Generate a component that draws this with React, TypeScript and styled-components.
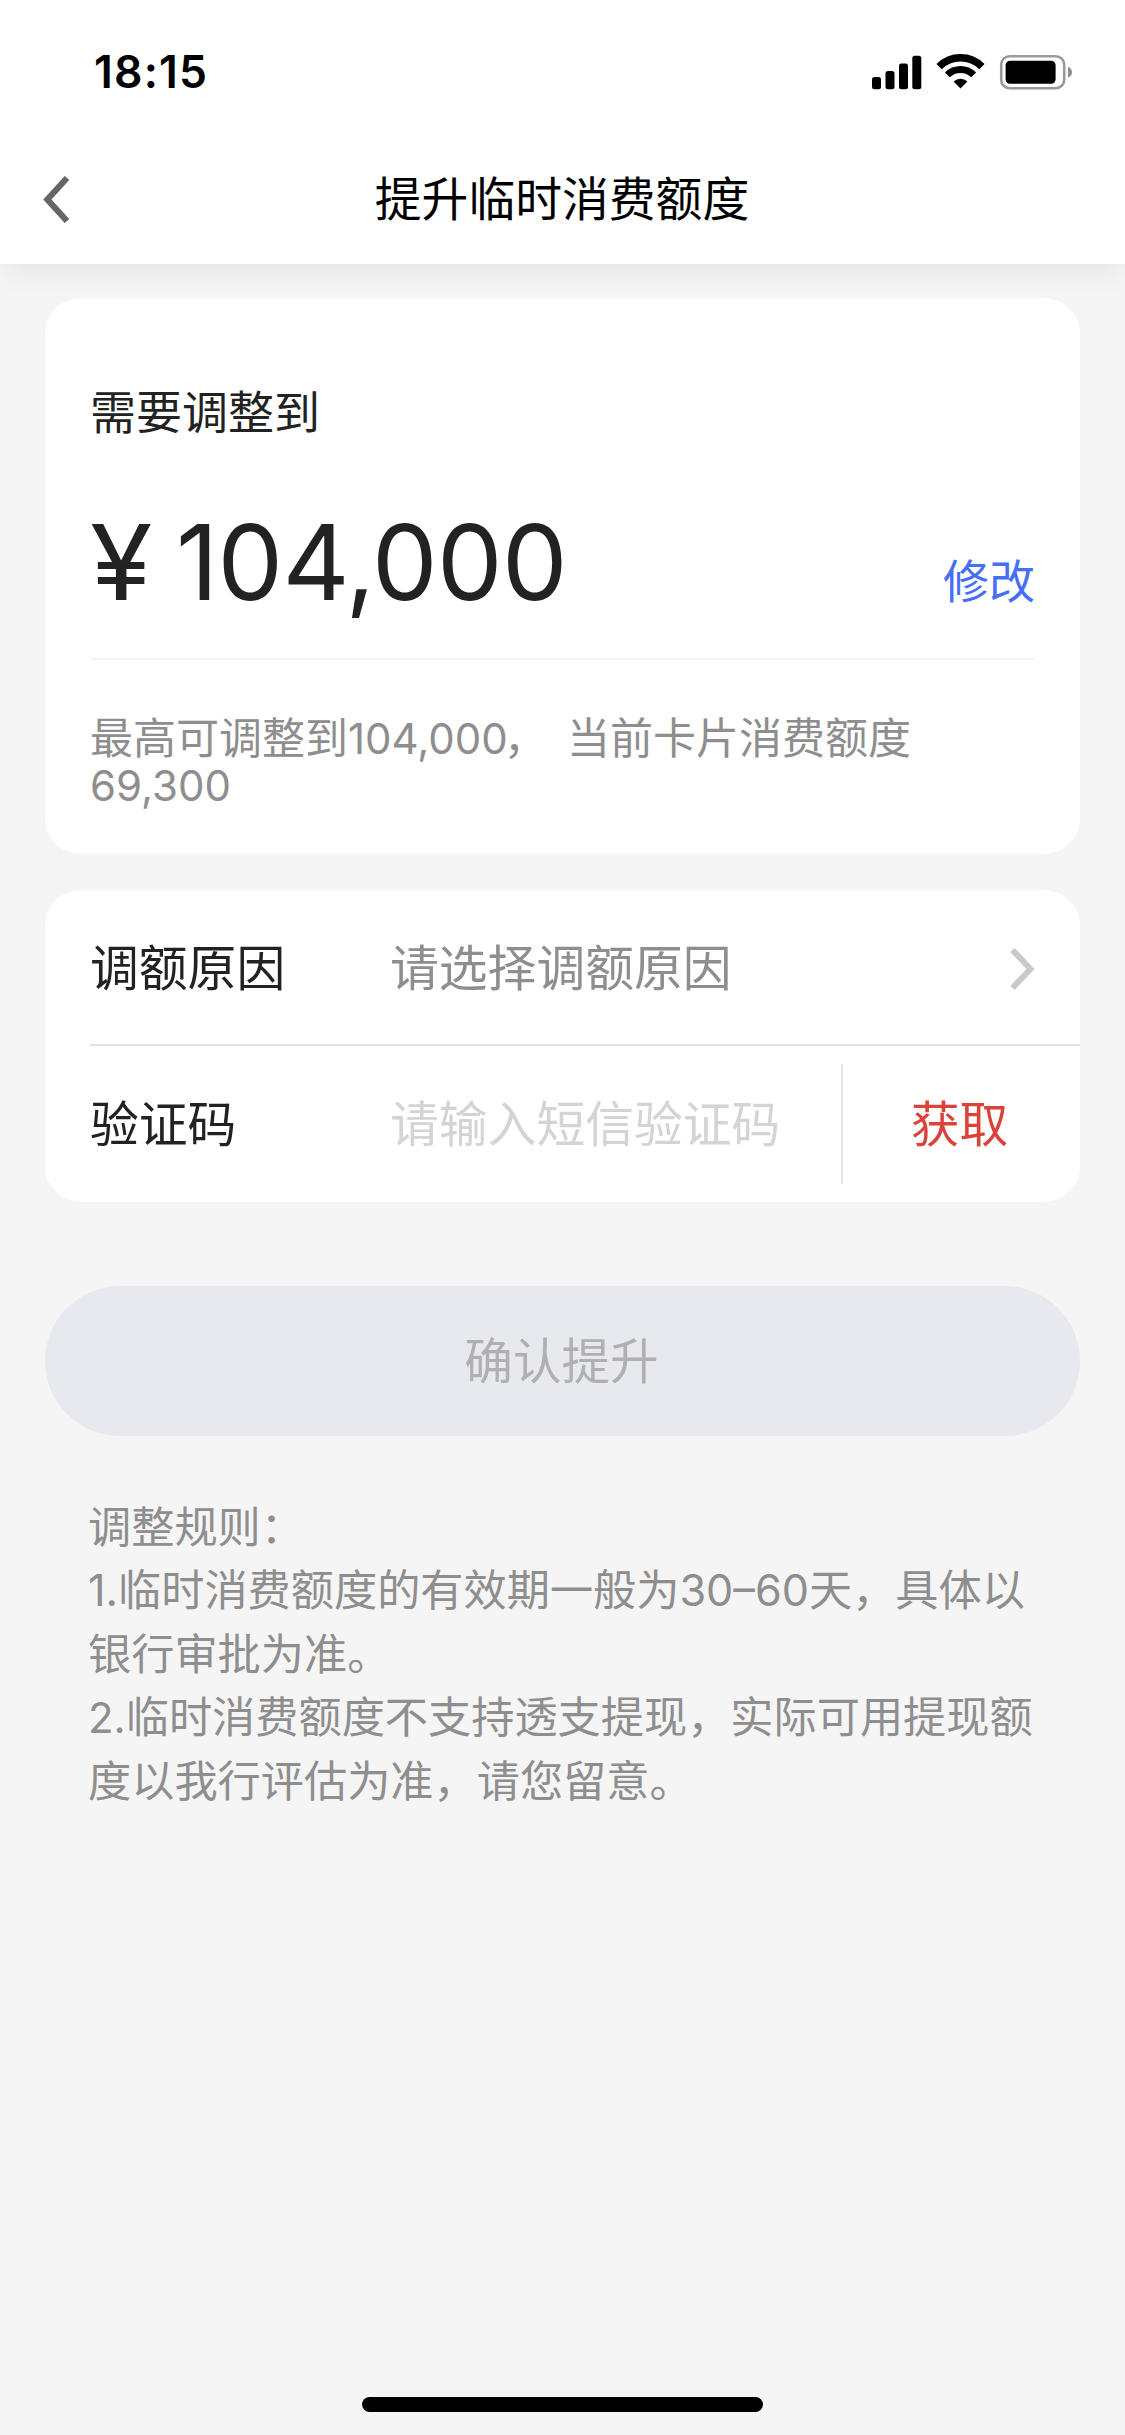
import React from "react";
import styled, { createGlobalStyle } from "styled-components";

const GlobalStyle = createGlobalStyle`
  * { box-sizing: border-box; }
  body { margin: 0; background: #f5f5f5; }
`;

const Screen = styled.div`
  display: flex;
  flex-direction: column;
  width: 1125px;
  height: 2435px;
  background: #f5f5f5;
  font-family: Inter, "Noto Sans CJK SC", sans-serif;
  font-weight: 400;
  color: #222;
  white-space: nowrap;
`;

const Header = styled.header`
  height: 264px;
  background: #fff;
  box-shadow: 0 8px 30px -4px rgba(0, 0, 0, 0.085);
`;

const StatusBar = styled.div`
  display: flex;
  justify-content: space-between;
  align-items: center;
  height: 132px;
  padding: 12px 52px 0 94px;
`;

const Clock = styled.time`
  font-size: 44.5px;
  line-height: 60px;
  font-weight: 600;
  letter-spacing: 1.2px;
  color: #000;
`;

const NavBar = styled.div`
  display: grid;
  grid-template-columns: 120px 1fr 120px;
  align-items: center;
  height: 132px;
`;

const BackButton = styled.button`
  display: flex;
  padding: 1px 0 0 42px;
  border: 0;
  background: none;
`;

const Title = styled.h1`
  margin: 1px 1px 0 0;
  text-align: center;
  font-size: 46.8px;
  line-height: 60px;
  font-weight: 400;
  color: #000;
`;

const Content = styled.main`
  display: flex;
  flex-direction: column;
  flex: 1;
  padding: 34px 45px 0;
`;

const Card = styled.section`
  border-radius: 36px;
  background: #fff;
  overflow: hidden;
`;

const AmountCard = styled(Card)`
  height: 556px;
  padding: 84px 45px 0;
`;

const Caption = styled.div`
  font-size: 46px;
  line-height: 60px;
`;

const AmountRow = styled.div`
  display: flex;
  justify-content: space-between;
  align-items: flex-end;
  margin-top: 60px;
  padding-bottom: 36px;
  border-bottom: 2px solid #f5f5f5;
`;

const Amount = styled.div`
  display: flex;
  font-size: 104px;
  line-height: 120px;
  letter-spacing: -0.7px;
`;

const Currency = styled.span`
  width: 86px;
  transform: scaleX(1.09);
  transform-origin: left;
`;

const EditLink = styled.button`
  margin: 0 0 11px;
  padding: 0;
  border: 0;
  background: none;
  font: inherit;
  font-size: 46px;
  line-height: 60px;
  color: #466ff5;
`;

const LimitNote = styled.p`
  margin: 55px 0 0;
  font-size: 43px;
  line-height: 46px;
  color: #8e8e8e;
`;

const Digits = styled.span`
  font-size: 42px;
`;

const Comma = styled.span`
  margin: 0 8px 0 -4px;
`;

const FormCard = styled(Card)`
  margin-top: 36px;
  height: 312px;
  padding-left: 45px;
`;

const Field = styled.div<{ $divided?: boolean }>`
  display: flex;
  align-items: center;
  height: 156px;
  padding-top: ${(p) => (p.$divided ? "4px" : "2px")};
  font-size: 48.8px;
  line-height: 64px;
  border-bottom: ${(p) => (p.$divided ? "2px solid #e3e3e5" : "0")};
`;

const FieldLabel = styled.label`
  width: 300px;
`;

const FieldValue = styled.div`
  flex: 1;
  color: #8e8e8e;
`;

const ChevronBox = styled.div`
  display: flex;
  padding-right: 45px;
`;

const CodeInput = styled.input`
  flex: 1;
  min-width: 0;
  height: 64px;
  padding: 0;
  border: 0;
  outline: 0;
  background: none;
  font: inherit;
  &::placeholder {
    color: #d4d4d4;
    opacity: 1;
  }
`;

const FetchButton = styled.button`
  width: 239px;
  height: 120px;
  margin-top: -2px;
  padding: 2px 4px 0 0;
  border: 0;
  border-left: 2px solid #e6e6e8;
  background: none;
  font: inherit;
  color: #d9433a;
`;

const SubmitButton = styled.button`
  flex: none;
  height: 150px;
  margin-top: 84px;
  padding: 1px 2px 0 0;
  border: 0;
  border-radius: 75px;
  background: #e8e9ee;
  font: inherit;
  font-size: 48.6px;
  line-height: 64px;
  color: #b0b0b3;
`;

const Rules = styled.div`
  margin-top: 60px;
  padding-left: 43px;
  font-size: 43.2px;
  line-height: 63.4px;
  color: #8e8e8e;
`;

const RuleLine = styled.div``;

const HomeIndicator = styled.div`
  align-self: center;
  width: 401px;
  height: 15px;
  margin-bottom: 23px;
  border-radius: 8px;
  background: #000;
`;

const StatusIcons = () => (
  <svg width="202" height="40" viewBox="871 51 202 40">
    <rect x="872" y="76" width="9" height="12.3" rx="2.5" />
    <rect x="885.5" y="70" width="9" height="18.3" rx="2.5" />
    <rect x="899" y="62.5" width="9" height="25.8" rx="2.5" />
    <rect x="912.3" y="54.8" width="9" height="33.5" rx="2.5" />
    <path d="M939.1 65.6A30.2 30.2 0 0 1 981.9 65.6" fill="none" stroke="#000" strokeWidth="7.5" />
    <path d="M947.4 73.9A18.5 18.5 0 0 1 973.6 73.9" fill="none" stroke="#000" strokeWidth="7" />
    <path d="M960.5 87.5L953.6 80.4A10 10 0 0 1 967.4 80.4Z" />
    <rect x="1001.2" y="55.2" width="63" height="32" rx="8.5" fill="none" stroke="#9a9a9a" strokeWidth="2.6" />
    <rect x="1005.6" y="59.7" width="50" height="23" rx="4.5" />
    <path d="M1068 65.8C1070.6 66.8 1072 68.8 1072 71.2C1072 73.6 1070.6 75.6 1068 76.6Z" fill="#8f8f8f" />
  </svg>
);

export default function App() {
  return (
    <>
      <GlobalStyle />
      <Screen>
        <Header>
          <StatusBar>
            <Clock>18:15</Clock>
            <StatusIcons />
          </StatusBar>
          <NavBar>
            <BackButton aria-label="返回">
              <svg width="30" height="48" viewBox="0 0 30 48" fill="none" stroke="#666" strokeWidth="6.2">
                <path d="M25 3L5.4 24.5L25 46" />
              </svg>
            </BackButton>
            <Title>提升临时消费额度</Title>
          </NavBar>
        </Header>
        <Content>
          <AmountCard>
            <Caption>需要调整到</Caption>
            <AmountRow>
              <Amount>
                <Currency>¥</Currency>
                <span>104,000</span>
              </Amount>
              <EditLink>修改</EditLink>
            </AmountRow>
            <LimitNote>
              最高可调整到<Digits>104,000</Digits>
              <Comma>，</Comma> 当前卡片消费额度
              <br />
              <Digits>69,300</Digits>
            </LimitNote>
          </AmountCard>
          <FormCard>
            <Field $divided>
              <FieldLabel>调额原因</FieldLabel>
              <FieldValue>请选择调额原因</FieldValue>
              <ChevronBox>
                <svg width="26" height="44" viewBox="0 0 26 44" fill="none" stroke="#c8c8cd" strokeWidth="6">
                  <path d="M3.5 3L21.4 22L3.5 41" />
                </svg>
              </ChevronBox>
            </Field>
            <Field>
              <FieldLabel htmlFor="code">验证码</FieldLabel>
              <CodeInput id="code" placeholder="请输入短信验证码" />
              <FetchButton>获取</FetchButton>
            </Field>
          </FormCard>
          <SubmitButton>确认提升</SubmitButton>
          <Rules>
            <RuleLine>调整规则：</RuleLine>
            <RuleLine>1.临时消费额度的有效期一般为30–60天，具体以</RuleLine>
            <RuleLine>银行审批为准。</RuleLine>
            <RuleLine>
              <Digits>2.</Digits>临时消费额度不支持透支提现，实际可用提现额
            </RuleLine>
            <RuleLine>度以我行评估为准，请您留意。</RuleLine>
          </Rules>
        </Content>
        <HomeIndicator />
      </Screen>
    </>
  );
}
